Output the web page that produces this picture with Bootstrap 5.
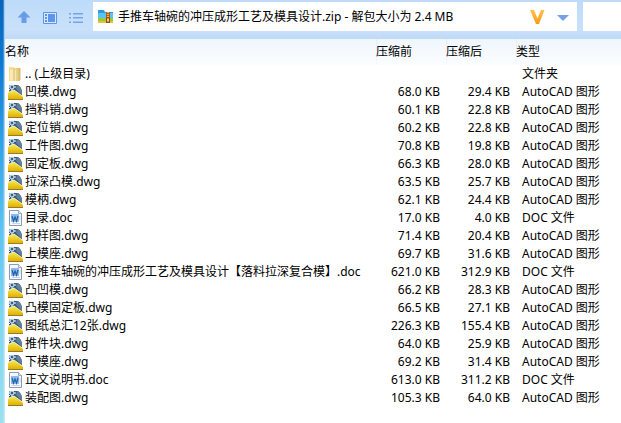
<!DOCTYPE html>
<html lang="zh-CN">
<head>
<meta charset="utf-8">
<meta name="viewport" content="width=device-width, initial-scale=1">
<title>手推车轴碗的冲压成形工艺及模具设计.zip</title>
<link href="https://cdn.jsdelivr.net/npm/bootstrap@5.3.0/dist/css/bootstrap.min.css" rel="stylesheet">
<style>
  body { font-family: "Noto Sans", "Noto Sans CJK SC", sans-serif; font-size: 12px; line-height: 18px; color: #000; background: #fff; }
  .desktop-edge { width: 5px; background: linear-gradient(90deg, transparent 60%, #d5efff), linear-gradient(#0b62bb, #0d79d2 15%, #35a3e6 35%, #5fc4f0 55%, #7fd6f0 75%, #9be0ee); }
  .tool-strip { height: 39px; padding-top: 2px; background: linear-gradient(#bddbf9, #c9e1fb 75%, #bfdaf6); }
  .tool-btn { width: 26px; height: 28px; line-height: 1; }
  .tool-set { padding-left: 6px; padding-right: 4px; }
  .address-box { height: 29px; padding-left: 4px; }
  .address-box input, .search-box input { font-size: 12px; line-height: 18px; color: #000; outline: 0; }
  .address-box input { padding-left: 4px; }
  .search-box { width: 38px; height: 29px; margin-left: 6px; }
  .drop-btn { width: 28px; height: 28px; margin-left: 4px; }
  .file-table { table-layout: fixed; }
  .file-table th { height: 26px; padding: 0; font-weight: 400; background: linear-gradient(#eff6fe, #fbfdff); }
  .file-table td { height: 18px; padding: 0; white-space: nowrap; }
  .file-table .size-head { background: linear-gradient(#e2edf9, #f3f8fd) left / 1px 100% no-repeat, linear-gradient(#eff6fe, #fbfdff); }
  .col-size { width: 70px; }
  .col-type { width: 105px; }
  .file-table td.size-cell { text-align: right; padding-right: 6px; }
  .file-table td.type-cell { padding-left: 6px; }
  .file-icon { width: 16px; height: 18px; flex: none; margin-left: 3px; margin-right: 1px; }
</style>
<script src="https://cdn.jsdelivr.net/npm/bootstrap@5.3.0/dist/js/bootstrap.bundle.min.js" defer></script>
</head>
<body>
<svg class="position-absolute" width="0" height="0" aria-hidden="true">
  <defs>
    <linearGradient id="gFolder"><stop offset="0" stop-color="#f8e8ad"/><stop offset=".5" stop-color="#f3dc92"/><stop offset="1" stop-color="#dfbd62"/></linearGradient>
    <linearGradient id="gYellow" x2="0" y2="1"><stop offset="0" stop-color="#f6ec5c"/><stop offset="1" stop-color="#e2b000"/></linearGradient>
    <linearGradient id="gV" x2="0" y2="1"><stop offset="0" stop-color="#ffc04a"/><stop offset="1" stop-color="#fb9a12"/></linearGradient>
    <symbol id="folder" viewBox="0 0 16 18">
      <path d="M1 2h5l1 1h5v13H1z" fill="url(#gFolder)"/>
      <path d="M1 2l5 2v12l-5-1z" fill="#f1d98d"/>
      <path d="M2 4l4 1v11l-4-1z" fill="#f9e9b4"/>
      <path d="M7 5v11" stroke="#fff6d4"/><path d="M6 4v12M12 3v12" stroke="#d2ae56" stroke-width=".8"/>
      <path d="M9 8h1v5H9z" fill="#c6d6cf"/>
    </symbol>
    <symbol id="dwg" viewBox="0 0 16 18">
      <path d="M2 2h8q3 2 4 7v5H1V3z" fill="#375b80"/><path d="M9 2q4 1 5 6v4L8 6z" fill="#647f9b"/>
      <path d="M0 16V9.500L6 7l9 6.500V16z" fill="url(#gYellow)"/><path d="M0 9.500L6 7l9 6.500" fill="none" stroke="#fff8b0" stroke-width=".9"/>
      <path d="M0 16.500h15" stroke="#8c6b10" stroke-width=".9"/>
      <circle cx="4" cy="4" r="2" fill="#2e608d" stroke="#eaf5ff"/>
      <path d="M4 0v2M4 6v2M0 4h2M6 4h2M1 1l1 1M7 1L6 2M1 7l1-1" stroke="#eaf5ff"/>
    </symbol>
    <symbol id="doc" viewBox="0 0 16 18">
      <path d="M1.500 1.500h9l3 3v12h-12z" fill="#f5f8fc" stroke="#8b9bb3"/><path d="M10.500 1.500v3h3" fill="#dce4ef" stroke="#8b9bb3" stroke-width=".8"/>
      <path d="M3 5h8v8H3z" fill="#8dbbea"/><path d="M4 7l1.500 5L7 8l1.500 4L10 7" fill="none" stroke="#1f60ad" stroke-width="1.200"/><path d="M11 8h2M11 10h2M4 14.500h8" stroke="#b5c5dc" stroke-width=".7"/>
    </symbol>
  </defs>
</svg>
<div class="d-flex min-vh-100">
  <div class="desktop-edge flex-shrink-0"></div>
  <main class="flex-grow-1 overflow-hidden">
    <div class="tool-strip d-flex align-items-start" role="toolbar" aria-label="工具栏">
      <div class="tool-set d-flex flex-shrink-0">
        <button type="button" class="tool-btn btn p-0 border-0 rounded-0" aria-label="向上">
          <svg width="14" height="14" viewBox="0 0 14 14" fill="#699be9"><path d="M7 1l6.500 6.500H9.500V13h-5V7.500H.5z"/></svg>
        </button>
        <button type="button" class="tool-btn btn p-0 border-0 rounded-0" aria-label="预览">
          <svg width="14" height="12" viewBox="0 0 14 12"><path d="M.5.5h13v11H.5z" fill="#d5e8fd" stroke="#5f94e8"/><path d="M5 2h7v8H5zM2 2h2v2H2zM2 5h2v2H2zM2 8h2v2H2z" fill="#5f94e8"/></svg>
        </button>
        <button type="button" class="tool-btn btn p-0 border-0 rounded-0" aria-label="列表">
          <svg width="14" height="12" viewBox="0 0 14 12" fill="#75a3eb"><path d="M0 1h2v1.500H0zM4 1h10v1.500H4zM0 5h2v1.500H0zM4 5h10v1.500H4zM0 9.500h2V11H0zM4 9.500h10V11H4z"/></svg>
        </button>
      </div>
      <div class="address-box d-flex align-items-center flex-grow-1 bg-white">
        <svg class="flex-shrink-0" width="17" height="16" viewBox="0 0 17 16" aria-hidden="true">
          <path d="M1 1h6l1 2h8v4H1z" fill="#2c9ce2"/><path d="M1 4h15v6H1z" fill="#59c3f1"/><path d="M1 9h15v3H1z" fill="#92cb42"/><path d="M1 12h15v2H1z" fill="#f1bc31"/>
          <path d="M9 3h4v11H9z" fill="#b35b18"/><path d="M11 3v9" stroke="#f9dd75" stroke-width="1.500" stroke-dasharray="1 1"/><path d="M9.500 9h3v4h-3z" fill="#f7d36a" stroke="#7c3a0c" stroke-width=".8"/>
        </svg>
        <input type="text" class="border-0 flex-grow-1 w-100 bg-transparent" aria-label="地址" value="手推车轴碗的冲压成形工艺及模具设计.zip - 解包大小为 2.4 MB">
        <svg class="flex-shrink-0" width="16" height="16" viewBox="0 0 16 16" role="img" aria-label="V"><path d="M1 1h4l3.500 8.500L12 1h3.500L10 15H7z" fill="url(#gV)"/></svg>
        <button type="button" class="drop-btn btn p-0 border-0 rounded-0 lh-1 flex-shrink-0" aria-label="展开">
          <svg width="12" height="6" viewBox="0 0 12 6"><path d="M0 0h12L6 6z" fill="#75a2e5"/></svg>
        </button>
      </div>
      <div class="search-box bg-white flex-shrink-0"><input type="search" class="border-0 w-100 bg-transparent" aria-label="搜索"></div>
    </div>
    <table class="file-table w-100">
      <colgroup><col><col class="col-size"><col class="col-size"><col class="col-type"></colgroup>
      <thead><tr><th scope="col">名称</th><th scope="col" class="size-head">压缩前</th><th scope="col" class="size-head">压缩后</th><th scope="col" class="size-head">类型</th></tr></thead>
      <tbody id="files"></tbody>
    </table>
  </main>
</div>
<script>
  const files = [
    [".. (上级目录)", "", "", "folder"],
    ["凹模.dwg", "68.0", "29.4", "dwg"],
    ["挡料销.dwg", "60.1", "22.8", "dwg"],
    ["定位销.dwg", "60.2", "22.8", "dwg"],
    ["工件图.dwg", "70.8", "19.8", "dwg"],
    ["固定板.dwg", "66.3", "28.0", "dwg"],
    ["拉深凸模.dwg", "63.5", "25.7", "dwg"],
    ["模柄.dwg", "62.1", "24.4", "dwg"],
    ["目录.doc", "17.0", "4.0", "doc"],
    ["排样图.dwg", "71.4", "20.4", "dwg"],
    ["上模座.dwg", "69.7", "31.6", "dwg"],
    ["手推车轴碗的冲压成形工艺及模具设计【落料拉深复合模】.doc", "621.0", "312.9", "doc"],
    ["凸凹模.dwg", "66.2", "28.3", "dwg"],
    ["凸模固定板.dwg", "66.5", "27.1", "dwg"],
    ["图纸总汇12张.dwg", "226.3", "155.4", "dwg"],
    ["推件块.dwg", "64.0", "25.9", "dwg"],
    ["下模座.dwg", "69.2", "31.4", "dwg"],
    ["正文说明书.doc", "613.0", "311.2", "doc"],
    ["装配图.dwg", "105.3", "64.0", "dwg"]
  ];
  const types = { folder: "文件夹", dwg: "AutoCAD 图形", doc: "DOC 文件" };
  const size = v => v ? v + " KB" : "";
  document.getElementById("files").innerHTML = files.map(([name, before, after, kind]) =>
    `<tr><td><div class="d-flex align-items-center"><svg class="file-icon" aria-hidden="true"><use href="#${kind}"/></svg><span>${name}</span></div></td>` +
    `<td class="size-cell">${size(before)}</td><td class="size-cell">${size(after)}</td><td class="type-cell">${types[kind]}</td></tr>`).join("");
</script>
</body>
</html>
